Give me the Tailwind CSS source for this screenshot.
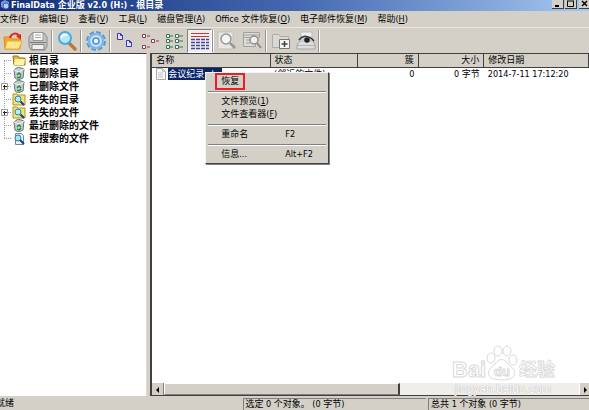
<!DOCTYPE html>
<html lang="zh-CN">
<head>
<meta charset="utf-8">
<title>FinalData 企业版</title>
<script src="https://cdn.jsdelivr.net/npm/@tailwindcss/browser@4"></script>
</head>
<body class="h-screen overflow-hidden bg-[#d4d0c8] text-black font-['DejaVu_Sans_Condensed','Noto_Sans_CJK_SC',sans-serif] text-[9px] leading-[13px] whitespace-nowrap">
<svg class="hidden">
  <symbol id="bin" viewBox="0 0 14 13"><path d="M2 3 6 0l6 2-1 9-5 2-3-2z" fill="#c3cccb" stroke="#6b7575"/><path d="M2 3l5 2 5-3" fill="none" stroke="#f4f6f6"/><path d="M5 8l2-2 2 2M9 9l-2 2-2-1" fill="none" stroke="#138a3c" stroke-width="1.3"/></symbol>
  <symbol id="find" viewBox="0 0 14 13"><path d="M1 1h4l1 1h7v10H1z" fill="#f7e468" stroke="#a8942a"/><circle cx="6" cy="6" r="3" fill="#b4ecfa" stroke="#2484b8"/><path d="M8.500 8.500 12 12" stroke="#123f94" stroke-width="2"/></symbol>
  <symbol id="loupe" viewBox="0 0 22 22"><path d="M2 2h15v17H2z" fill="#e9e7e3" stroke="#c2bfb9"/><circle cx="10" cy="9" r="5" fill="#f5f5f5" stroke="#989692" stroke-width="1.500"/><path d="M14 13l5 5" stroke="#989692" stroke-width="2.500"/></symbol>
</svg>
<div class="flex h-full flex-col">
  <header class="flex h-[11px] shrink-0 items-center bg-linear-to-r from-[#122f78] via-[#4468b0] to-[#a6c8f0] text-white">
    <svg class="h-[11px] w-[11px]" viewBox="0 0 11 11"><path d="M1 2l4-2 4 2v5L5 9 1 7z" fill="#7897dd"/><circle cx="6" cy="6" r="3" fill="#b7cdf5" stroke="#385caf"/></svg>
    <h1 class="grow leading-[11px] font-bold">FinalData 企业版 v2.0 (H:) - 根目录</h1>
    <div class="flex gap-px self-start">
      <button aria-label="最小化" class="h-[9px] w-3 border-r border-b border-[#404040] bg-[#d4d0c8]"><svg class="h-2 w-[11px]" viewBox="0 0 11 8"><path d="M3 6h4" stroke="#000" stroke-width="2"/></svg></button>
      <button aria-label="还原" class="h-[9px] w-3 border-r border-b border-[#404040] bg-[#d4d0c8]"><svg class="h-2 w-[11px]" viewBox="0 0 11 8"><path d="M2.500 1v5.500h6V1M2 1h7" fill="none" stroke="#000"/></svg></button>
      <button aria-label="关闭" class="ml-px h-[9px] w-[10px] border-b border-[#404040] bg-[#d4d0c8]"><svg class="h-2 w-[10px]" viewBox="0 0 10 8"><path d="M3 1l5 5M8 1 3 6" stroke="#000" stroke-width="1.500"/></svg></button>
    </div>
  </header>
  <nav class="flex h-4 shrink-0 items-center gap-[10px]">
    <button>文件(<u>F</u>)</button><button>编辑(<u>E</u>)</button><button>查看(<u>V</u>)</button><button>工具(<u>L</u>)</button><button>磁盘管理(<u>A</u>)</button><button>Office 文件恢复(<u>O</u>)</button><button>电子邮件恢复(<u>M</u>)</button><button>帮助(<u>H</u>)</button>
  </nav>
  <div class="flex h-[26px] shrink-0 items-center border-t border-[#e9e7e2] [&>button]:flex [&>button]:h-6 [&>button]:w-[25px] [&>button]:items-center [&>button]:justify-center [&_svg]:size-[22px]">
    <button aria-label="打开"><svg viewBox="0 0 22 22"><path d="M2 7h6l2 2h8v10H3z" fill="#f4a62a" stroke="#dc8c22"/><path d="M5 11h15l-3 8H3z" fill="#ffe58a" stroke="#e8a83a"/><path d="M8 8c1-5 7-6 9-2" fill="none" stroke="#dc2b13" stroke-width="2"/><path d="M14 6l5-2 0 6z" fill="#dc2b13"/></svg></button>
    <button aria-label="保存"><svg viewBox="0 0 22 22"><path d="M2 7l3-4h12l3 4v9l-2 4H4l-2-4z" fill="#c4c3c1" stroke="#8b8a88"/><path d="M6 2.500h10v8H6z" fill="#fafafa" stroke="#999"/><path d="M5 14.500h12v5H5z" fill="#f0f0f0" stroke="#888"/><path d="M8 5h6M8 7.500h6" stroke="#aaa"/><path d="M3 12.500h16" stroke="#7c7b79"/></svg></button>
    <div class="mx-px h-[22px] w-0.5 border-l border-[#96938c] bg-white"></div>
    <button aria-label="查找"><svg viewBox="0 0 22 22"><path d="M13 13l6 6" stroke="#b87a3c" stroke-width="3.500" stroke-linecap="round"/><circle cx="9" cy="8" r="6" fill="#b4e8fb" stroke="#4ba9e2" stroke-width="2"/><path d="M5 8c1-3 3-4 6-3" stroke="#fff" stroke-width="2" fill="none"/></svg></button>
    <div class="mx-px h-[22px] w-0.5 border-l border-[#96938c] bg-white"></div>
    <button aria-label="设置"><svg viewBox="0 0 22 22"><circle cx="11" cy="11" r="9" fill="none" stroke="#5797d8" stroke-width="2" stroke-dasharray="4.700 2.370"/><circle cx="11" cy="11" r="7" fill="#c4e2fa" stroke="#79b2e8" stroke-width="2"/><circle cx="11" cy="11" r="3" fill="#f0f8fd" stroke="#4b8fd4" stroke-width="1.500"/></svg></button>
    <div class="mx-px h-[22px] w-0.5 border-l border-[#96938c] bg-white"></div>
    <button aria-label="大图标"><svg viewBox="0 0 22 22" fill="#e5e5ff" stroke="#3434c4"><path d="M3.500 3.500h3l2 2v4h-5zM6.500 3.500v2h2M12.500 10.500h3l2 2v4h-5zM15.500 10.500v2h2"/></svg></button>
    <button aria-label="小图标"><svg viewBox="0 0 22 22" fill="#fff" stroke="#963263"><path d="M3.500 4.500h3v3h-3zM12.500 9.500h3v3h-3zM3.500 15.500h3v3h-3zM8 6h3M17 11h3M8 17h3"/></svg></button>
    <button aria-label="列表"><svg viewBox="0 0 22 22" fill="#fff" stroke="#317655"><path d="M2.500 4.500h3v3h-3zM11.500 4.500h3v3h-3zM2.500 9.500h3v3h-3zM11.500 9.500h3v3h-3zM2.500 15.500h3v3h-3zM11.500 15.500h3v3h-3zM6 6h3M15 6h4M6 11h3M15 11h4M6 17h3M15 17h4"/></svg></button>
    <button aria-label="详细资料" class="border border-[#85837e] border-r-white border-b-white bg-[#efeeeb]"><svg viewBox="0 0 22 22"><path d="M2 3.500h18M2 6.500h18" stroke="#c33939"/><path d="M2 9.500h18M2 12.500h18M2 15.500h18M2 18.500h18" stroke="#4343a1" stroke-width="1.500" stroke-dasharray="4 1"/></svg></button>
    <div class="h-[22px] w-0.5 border-l border-[#96938c] bg-white"></div>
    <button aria-label="预览"><svg><use href="#loupe"/></svg></button>
    <button aria-label="查看器"><svg viewBox="0 0 22 22"><path d="M2.500 2.500h16v5h-16zM2.500 7.500h12v9h-12z" fill="#dedcd7" stroke="#a3a19c"/><path d="M3 5h15M5 10h4M5 13h4" stroke="#a3a19c"/><circle cx="13" cy="10" r="4" fill="#efefef" stroke="#8f8d89" stroke-width="1.500"/><path d="M16 13l4 5" stroke="#8f8d89" stroke-width="2"/></svg></button>
    <div class="mx-px h-[22px] w-0.5 border-l border-[#96938c] bg-white"></div>
    <button aria-label="新建"><svg viewBox="0 0 22 22"><path d="M2.500 4.500h6l2 2h8v11h-16z" fill="#d9d8d5" stroke="#aeaca8"/><path d="M9.500 9.500h10v9h-10z" fill="#f4f4f4" stroke="#777"/><path d="M14.500 11v6M11.500 14h6" stroke="#444" stroke-width="1.500"/></svg></button>
    <button aria-label="查看"><svg viewBox="0 0 22 22"><path d="M6 2h11v9H6z" fill="#f0f0f0" stroke="#bbb"/><path d="M5 11h13l2 4v4H2v-4z" fill="#dedede" stroke="#a4a4a4"/><path d="M2 15.500h18" stroke="#b4b4b4"/><path d="M4 10c4-5 10-5 15 0-5 3-10 3-15 0z" fill="#ccc"/><path d="M4 10c4-5 10-5 15 1" fill="none" stroke="#333" stroke-width="1.500"/><circle cx="12" cy="10" r="2.800" fill="#222"/></svg></button>
    <div class="h-[22px] w-0.5 border-l border-[#96938c] bg-white"></div>
  </div>
  <main class="flex min-h-0 grow gap-[3px]">
    <aside class="w-1/4 shrink-0 border-t border-r border-t-[#404040] border-r-[#dedbd5] bg-white text-[10px] font-bold">
      <ul class="relative [&>li]:flex [&>li]:h-[13px] [&>li]:items-center [&>li]:gap-[3px] [&>li]:pl-3 [&_svg]:h-[13px] [&_svg]:w-[14px]">
        <li><svg viewBox="0 0 14 13"><path d="M1 2h5l1 2h6v7H2z" fill="#e7bd32" stroke="#8b711e"/><path d="M3 5h10l-1 6H2z" fill="#fff2a0"/></svg>根目录</li>
        <li><svg><use href="#bin"/></svg>已删除目录</li>
        <li><svg><use href="#bin"/></svg>已删除文件</li>
        <li><svg><use href="#find"/></svg>丢失的目录</li>
        <li><svg><use href="#find"/></svg>丢失的文件</li>
        <li><svg><use href="#bin"/></svg>最近删除的文件</li>
        <li><svg viewBox="0 0 14 13"><path d="M3.500 1.500h6l2 2v9h-8z" fill="#eef5fa" stroke="#6c8796"/><circle cx="6" cy="6" r="3" fill="#a7e3f6" stroke="#2484b8"/><path d="M8 8l4 4" stroke="#123f94" stroke-width="2"/></svg>已搜索的文件</li>
        <svg class="absolute top-0 left-0 h-[92px]! w-3!" viewBox="0 0 12 92"><path d="M4.500 7v78M4 6.500h8M4 19.500h8M4 32.500h8M4 45.500h8M4 58.500h8M4 71.500h8M4 84.500h8" stroke="#999" stroke-dasharray="1 1"/><path d="M1.500 29.500h6v6h-6zM1.500 55.500h6v6h-6z" fill="#fff" stroke="#999"/><path d="M3 32.500h4M4.500 31v4M3 58.500h4M4.500 57v4" stroke="#222"/></svg>
      </ul>
    </aside>
    <section class="relative flex min-w-0 grow flex-col border-t border-b border-l-2 border-[#404040] bg-white">
      <table class="w-full table-fixed border-collapse text-left">
        <colgroup><col class="w-[27%]"><col class="w-[20%]"><col class="w-[14%]"><col class="w-[15%]"><col></colgroup>
        <thead><tr class="bg-[#d4d0c8] [&>th]:h-[13px] [&>th]:border-r [&>th]:border-b [&>th]:border-[#404040] [&>th]:px-1 [&>th]:py-0 [&>th]:font-normal [&>th]:leading-3"><th>名称</th><th>状态</th><th class="text-right">簇</th><th class="text-right">大小</th><th>修改日期</th></tr></thead>
        <tbody><tr class="[&>td]:h-[13px] [&>td]:px-1 [&>td]:py-0 [&>td]:leading-3"><td><div class="flex items-center gap-px"><svg class="h-3 w-[11px]" viewBox="0 0 11 12"><path d="M.5.5h6l3 3v8h-9z" fill="#f8f8f8" stroke="#aaa"/><path d="M6.500.5v3h3M2 5h5M2 7h5M2 9h5" fill="none" stroke="#c4c4c4"/></svg><span class="h-3 bg-[#0a246a] pr-1 text-white">会议纪录.xls</span></div></td><td>(邻近的文件)</td><td class="text-right">0</td><td class="text-right">0 字节</td><td>2014-7-11 17:12:20</td></tr></tbody>
      </table>
      <div class="mt-auto flex h-3 bg-[#efeeeb]">
        <button aria-label="向左" class="w-3 border-r border-[#808080] bg-[#d4d0c8]"><svg class="size-[11px]" viewBox="0 0 11 11"><path d="M7 3v6L4 6z"/></svg></button>
        <div class="w-[54%] border-t border-l border-r-2 border-b border-white border-r-[#404040] border-b-[#808080] bg-[#d4d0c8]"></div>
        <button aria-label="向右" class="ml-auto w-[10px] border-l border-white bg-[#d4d0c8]"><svg class="size-[11px]" viewBox="0 0 11 11"><path d="M4 3v6l3-3z"/></svg></button>
      </div>
      <div class="pointer-events-none absolute right-[34px] bottom-0 w-[104px]">
        <svg class="h-[38px] w-full overflow-visible" viewBox="0 0 104 38" fill="#fff" stroke="#d9d9d9" font-family="Liberation Sans, Noto Sans CJK SC, sans-serif"><text x="1" y="32" font-size="22" font-weight="bold">Bai</text><path d="M40 33c-6-5 0-11 4-14 4-6 9-6 13 0 5 4 10 9 4 14-6 3-15 2-21 0z"/><ellipse cx="40" cy="13" rx="4" ry="5"/><ellipse cx="47" cy="6" rx="4" ry="5"/><ellipse cx="56" cy="6" rx="4" ry="5"/><ellipse cx="62" cy="15" rx="4" ry="5"/><text x="43" y="31" font-size="13" font-weight="bold">du</text><text x="68" y="31" font-size="18" font-weight="bold" stroke-width=".8">经验</text></svg>
        <div class="text-center font-['Liberation_Sans',sans-serif] text-[12px] leading-3 text-white [text-shadow:0_0_1px_#888]">jingyan.baidu.com</div>
      </div>
      <div role="menu" class="absolute top-[18px] left-[53px] w-[124px] border border-[#f5f4f1] border-r-[#404040] border-b-[#404040] bg-[#d4d0c8] pt-0.5 pb-0.5 shadow-[1px_1px_0_#808080] [&>button]:flex [&>button]:h-[13px] [&>button]:w-full [&>button]:items-center [&>button]:pl-[15px] [&>hr]:mx-0.5 [&>hr]:my-[3px] [&>hr]:border-t-[#808080] [&>hr]:shadow-[0_1px_0_#fff]">
        <button role="menuitem"><span class="-m-1.5 border-2 border-[#ee1c24] px-1">恢复</span></button>
        <hr>
        <button role="menuitem">文件预览(<u>1</u>)</button>
        <button role="menuitem">文件查看器(<u>F</u>)</button>
        <hr>
        <button role="menuitem"><span class="w-16 text-left">重命名</span>F2</button>
        <hr>
        <button role="menuitem"><span class="w-16 text-left">信息...</span>Alt+F2</button>
      </div>
    </section>
  </main>
  <footer class="mt-0.5 flex h-3 shrink-0 gap-0.5 leading-[11px]">
    <div class="w-[41%] -indent-1">就绪</div>
    <div class="w-[31%] border-t border-l border-[#808080] pl-px">选定 0 个对象。 (0 字节)</div>
    <div class="grow border-t border-l border-[#808080] pl-0.5">总共 1 个对象 (0 字节)</div>
  </footer>
</div>
</body>
</html>
